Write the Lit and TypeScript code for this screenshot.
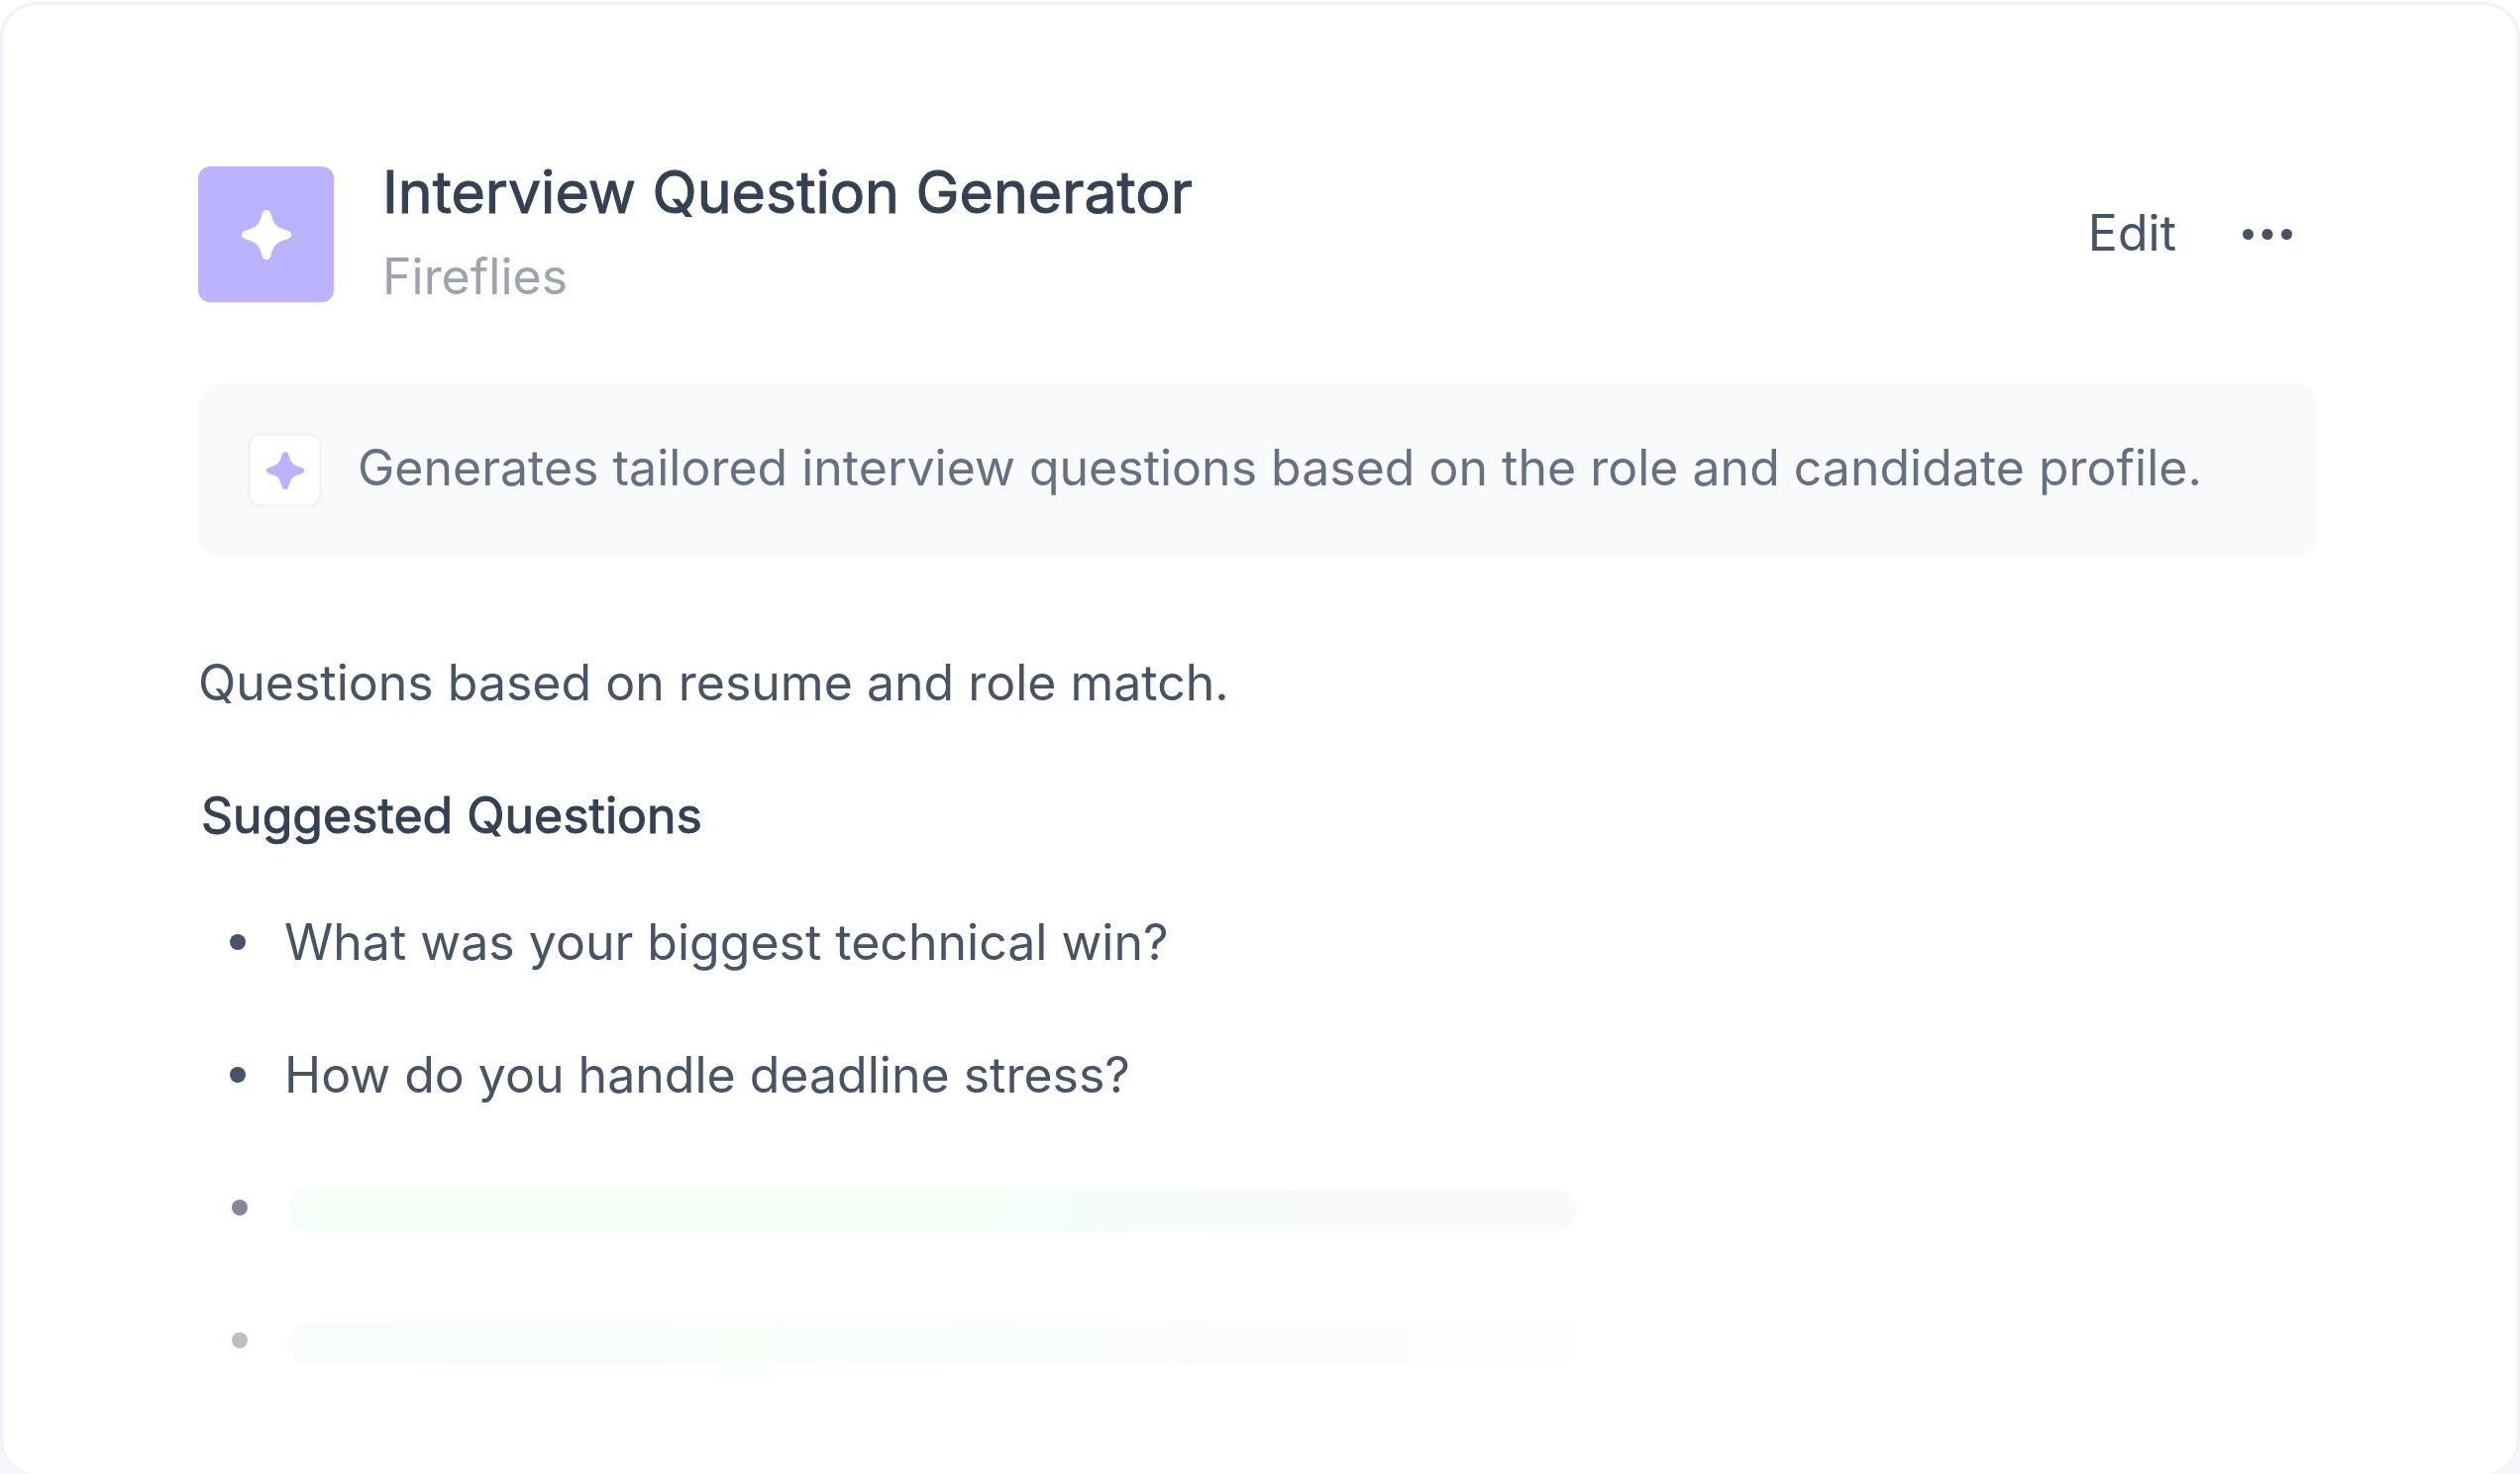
import { LitElement, html, css, svg } from "lit";
import { customElement } from "lit/decorators.js";

const star = svg`<path d="M25 0C28 0 29 2 30 6C32 14 36 18 44 20C48 21 50 22 50 25C50 28 48 29 44 30C36 32 32 36 30 44C29 48 28 50 25 50C22 50 21 48 20 44C18 36 14 32 6 30C2 29 0 28 0 25C0 22 2 21 6 20C14 18 18 14 20 6C21 2 22 0 25 0Z" fill="currentColor"/>`;

@customElement("app-root")
export class AppRoot extends LitElement {
  static styles = css`
    :host {
      display: block;
      min-height: 100vh;
      box-sizing: border-box;
      padding-top: 2px;
      background: linear-gradient(#fff 50%, #f5f6f9);
      font-family: Inter, "Liberation Sans", sans-serif;
      font-size: 50px;
      line-height: 60px;
      color: #475467;
    }
    .card {
      box-sizing: border-box;
      min-height: calc(100vh - 2px);
      padding: 159px 201px 90px 197px;
      border: 3px solid #f2f3f8;
      border-bottom: 0;
      border-radius: 36px;
      background: #fff;
    }
    .head {
      display: flex;
      align-items: center;
      gap: 49px;
    }
    .logo {
      display: grid;
      place-items: center;
      width: 137px;
      height: 137px;
      border-radius: 12px;
      background: #bbb3ff;
      color: #fff;
    }
    .logo svg { width: 50px; height: 50px; }
    .names {
      display: grid;
      flex: 1;
      gap: 25px;
    }
    h1, h2, p, ul { margin: 0; }
    h1, h2 {
      line-height: 60px;
      font-weight: 400;
      color: #344054;
      -webkit-text-stroke: 1px currentColor;
    }
    h1 { font-size: 59px; }
    h2 {
      margin-top: 74px;
      padding-left: 3px;
      font-size: 50px;
    }
    .owner { color: #9da4b0; }
    .actions {
      display: flex;
      align-items: center;
      gap: 57px;
      padding-right: 16px;
    }
    button {
      padding: 0;
      border: 0;
      background: none;
      font: inherit;
      color: inherit;
      cursor: pointer;
    }
    .edit { padding-bottom: 4px; }
    .more { display: flex; padding: 10px; }
    .more svg { width: 50px; height: 11px; }
    .note {
      display: flex;
      align-items: center;
      gap: 36px;
      margin-top: 78px;
      padding: 50px;
      border-radius: 24px;
      background: #f9fafc;
      color: #667085;
    }
    .note p { padding-bottom: 6px; }
    .badge {
      display: grid;
      place-items: center;
      box-sizing: border-box;
      width: 75px;
      height: 75px;
      border: 3px solid #f2f3f7;
      border-radius: 12px;
      background: #fff;
      color: #bbb3ff;
    }
    .badge svg { width: 38px; height: 38px; }
    .intro { margin-top: 97px; }
    ul {
      display: grid;
      gap: 74px;
      margin-top: 68px;
      padding: 0 0 0 32px;
      list-style: none;
    }
    li {
      display: flex;
      align-items: center;
      gap: 39px;
      min-height: 60px;
    }
    .dot {
      width: 16px;
      height: 16px;
      border-radius: 50%;
      background: currentColor;
    }
    .pending { padding-left: 2px; gap: 41px; }
    .bar {
      width: 62%;
      max-width: 1301px;
      height: 44px;
      margin-top: 5px;
      border-radius: 22px;
      background: linear-gradient(90deg, #f4fff7 50%, #f9fafc 85%);
    }
    .soft .dot { background: #7f899a; }
    .faint .dot { background: #b9bec7; }
    .faint .bar { background: linear-gradient(90deg, #f8fcfa, #f7fff9 35%, #f8fefa 50%, #fbfcfd 75%, #fdfdfe); }
  `;

  render() {
    return html`
      <main class="card">
        <header class="head">
          <div class="logo"><svg viewBox="0 0 50 50" aria-hidden="true">${star}</svg></div>
          <div class="names">
            <h1>Interview Question Generator</h1>
            <p class="owner">Fireflies</p>
          </div>
          <div class="actions">
            <button class="edit">Edit</button>
            <button class="more" aria-label="More options">
              <svg viewBox="0 0 50 11" fill="currentColor" aria-hidden="true">
                <circle cx="5.5" cy="5.5" r="5.5" /><circle cx="25" cy="5.5" r="5.5" /><circle cx="44.5" cy="5.5" r="5.5" />
              </svg>
            </button>
          </div>
        </header>
        <section class="note">
          <div class="badge"><svg viewBox="0 0 50 50" aria-hidden="true">${star}</svg></div>
          <p>Generates tailored interview questions based on the role and candidate profile.</p>
        </section>
        <p class="intro">Questions based on resume and role match.</p>
        <h2>Suggested Questions</h2>
        <ul>
          <li><span class="dot"></span>What was your biggest technical win?</li>
          <li><span class="dot"></span>How do you handle deadline stress?</li>
          <li class="pending soft"><span class="dot"></span><span class="bar"></span></li>
          <li class="pending faint"><span class="dot"></span><span class="bar"></span></li>
        </ul>
      </main>
    `;
  }
}
